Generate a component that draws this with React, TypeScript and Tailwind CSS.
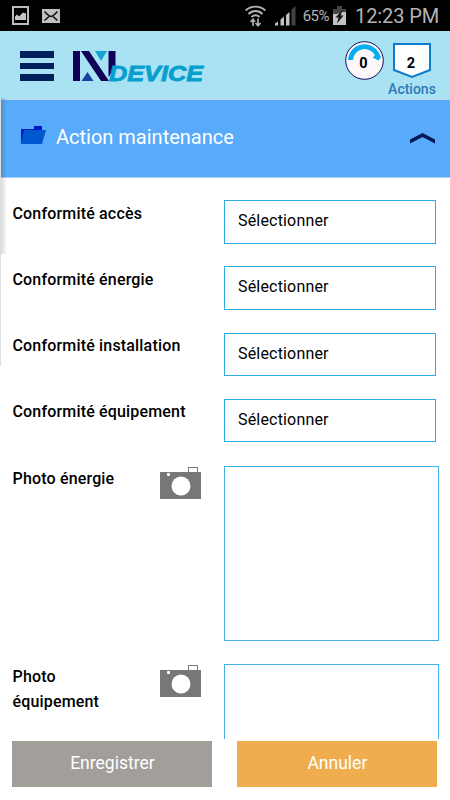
const fields = [
  { label: 'Conformité accès', value: 'Sélectionner' },
  { label: 'Conformité énergie', value: 'Sélectionner' },
  { label: 'Conformité installation', value: 'Sélectionner' },
  { label: 'Conformité équipement', value: 'Sélectionner' },
];

const photos = [{ label: 'Photo énergie' }, { label: 'Photo équipement' }];

const StatusBar = () => (
  <div className="flex h-[31px] shrink-0 items-center justify-between bg-black pr-[12px] pl-[12px] text-[#b3b3b3]">
    <div className="flex items-center gap-[13px]">
      <svg width="17" height="19" viewBox="0 0 17 19">
        <rect x="1" y="1" width="15" height="17" fill="none" stroke="#bdbdbd" strokeWidth="2" />
        <path d="M3 13V10.500l2-2 2 2 4-4 3 1V14H3z" fill="#c6c6c6" />
      </svg>
      <svg width="18" height="14" viewBox="0 0 18 14">
        <rect width="18" height="14" fill="#c0c0c0" />
        <path d="M2.500 2.500C6 6 7 7.500 9 7.500S12 6 15.500 2.500M2.500 11.500l4.500-4M15.500 11.500l-4.500-4" fill="none" stroke="#111" strokeWidth="1.600" />
      </svg>
    </div>
    <div className="flex items-center">
      <svg className="mr-[9px]" width="21" height="22" viewBox="0 0 21 22" fill="none" stroke="#b3b3b3" strokeWidth="1.900">
        <path d="M.700 5.500C6 .300 15 .300 20.300 5.500M3.500 9C7.500 5 13.500 5 17.500 9M6.500 12C9 9.800 12 9.800 14.500 12" />
        <path d="M8 21v-7M5.500 17 8 14.300l2 2.500M13 13.500v7M10.500 18l2.500 2.700 2.500-2.700" strokeWidth="1.700" />
      </svg>
      <svg className="mr-[7px]" width="21" height="20" viewBox="0 0 21 20">
        <path d="M0 19.500v-2l3-2v4zM5.500 19.500v-6l3.500-3v9zM11 19.500V9l3.500-3v13.500z" fill="#c2c2c2" />
        <path d="M16.500 19.500V3.500L20.500 0v19.500z" fill="#424242" />
      </svg>
      <span className="mr-[4px] text-[15px] leading-[20px] tracking-[-0.500px]">65%</span>
      <svg className="mr-[9px]" width="13" height="20" viewBox="0 0 13 20">
        <path d="M0 3h4V0h5v3h4v6H0z" fill="#444" />
        <path d="M0 8h4l5-2h4v13H0z" fill="#c2c2c2" />
        <path d="M10 3.500 2.500 11.500h3L4 17.500l6.500-8H7.500z" fill="#111" />
      </svg>
      <span className="w-[83px] text-[20px] leading-[24px] tracking-[-0.100px] whitespace-nowrap">12:23 PM</span>
    </div>
  </div>
);

const Logo = () => (
  <svg width="140" height="36" viewBox="0 0 140 36">
    <path d="M0 0h7v30H0zM8 0h8l20 30h-8zM35.500 0h7v17l-7 9z" fill="#100058" />
    <path d="M22 0h12l-6 10z" fill="#12a5d3" />
    <path d="M14.500 21l6 9h-12z" fill="#1742a0" />
    <text
      x="36"
      y="30"
      textLength="94"
      lengthAdjust="spacingAndGlyphs"
      fontFamily="Liberation Sans, sans-serif"
      fontSize="21.500"
      fontWeight="700"
      fontStyle="italic"
      fill="#079fce"
      stroke="#079fce"
      strokeWidth=".8"
    >
      DEVICE
    </text>
  </svg>
);

const Header = () => (
  <header className="flex h-[68px] shrink-0 justify-between bg-[#a9e2f3] pr-[14px] pl-[20px]">
    <div className="flex pt-[20px]">
      <button className="mr-[19px] flex w-[34px] flex-col gap-[5px]" aria-label="Menu">
        <span className="h-[7px] w-full bg-[#00205b]" />
        <span className="h-[6px] w-full bg-[#00205b]" />
        <span className="h-[7px] w-full bg-[#00205b]" />
      </button>
      <Logo />
    </div>
    <div className="flex pt-[10px] text-[15px] font-medium text-black">
      <svg className="mr-[4px]" width="39" height="39" viewBox="0 0 39 39">
        <circle cx="19.500" cy="19.500" r="18.800" fill="#fcf7fa" stroke="#120b66" strokeWidth="1" />
        <path d="M5.500 19A14 14 0 0 1 32.500 14.500" fill="none" stroke="#08adf0" strokeWidth="4.800" />
        <path d="M27.500 16.500 33.500 19.500 36 16 33.500 11.500z" fill="#08adf0" />
        <text x="18.500" y="26.500" textAnchor="middle" fontWeight="700" fontSize="14.500">0</text>
      </svg>
      <div className="flex w-[48px] flex-col items-center">
        <svg width="40" height="38" viewBox="0 0 40 38">
          <path d="M2 3h36v26l-18 7L2 29z" fill="#fff" stroke="#0b7bcd" strokeWidth="2" />
          <text x="19" y="26.500" textAnchor="middle" fontWeight="700" fontSize="14.500">2</text>
        </svg>
        <span className="text-[14px] leading-[20px] font-medium text-[#2f79b9]">Actions</span>
      </div>
    </div>
  </header>
);

const SectionHeader = () => (
  <div className="flex h-[79px] shrink-0 items-center border-t border-b border-t-[#bed8e4] border-b-[#a9cff5] bg-[#58aafa] pr-[15px] pb-[4px] pl-[21px]">
    <svg className="mr-[10px] mb-[4px]" width="25" height="18" viewBox="0 0 25 18">
      <path d="M0 3h13V0h8v5L4 17H0z" fill="#0018c8" />
      <path d="M3 4h22l-4 14H0z" fill="#0058d0" />
    </svg>
    <h1 className="grow text-[20px] leading-[28px] font-normal text-white">Action maintenance</h1>
    <svg className="mt-[4px]" width="25" height="11" viewBox="0 0 25 11">
      <path d="M0 6.500 12.500 0 25 6.500v4L12.500 4 0 10.500z" fill="#061759" />
    </svg>
  </div>
);

const Camera = () => (
  <svg className="mt-[1px] shrink-0" width="41" height="32" viewBox="0 0 41 32">
    <rect x="28.500" y=".5" width="9" height="5" fill="#fff" stroke="#777" />
    <path d="M0 5h41v27H0z" fill="#777" />
    <circle cx="21" cy="19" r="9.500" fill="#fff" />
    <rect x="7" y="6" width="3" height="3" rx="1" fill="#fff" />
  </svg>
);

const SelectRow = ({ label, value }: { label: string; value: string }) => (
  <div className="flex h-[66.300px] shrink-0 items-start justify-between pr-[14px]">
    <label className="pt-[0.500px] text-[16px] leading-[26px] font-medium tracking-[0.170px]">{label}</label>
    <div className="h-[43.500px] w-[212px] border border-[#2caae2] bg-white pt-[8px] pl-[13px] text-[16px] leading-[24px] tracking-[0.180px]">
      {value}
    </div>
  </div>
);

const PhotoRow = ({ label }: { label: string }) => (
  <div className="flex h-[198px] shrink-0 items-start pr-[11px]">
    <label className="w-[147px] shrink-0 pr-[35px] text-[16px] leading-[25px] font-medium tracking-[0.170px]">{label}</label>
    <Camera />
    <div className="ml-auto h-[175px] w-[215px] border border-[#43b0e8] bg-white" />
  </div>
);

export default function App() {
  return (
    <div className="relative flex h-[800px] w-[450px] flex-col overflow-hidden bg-white font-['Roboto',sans-serif] text-black">
      <StatusBar />
      <Header />
      <SectionHeader />
      <main className="flex h-[561px] flex-col overflow-hidden pt-[22px] pl-[12.500px]">
        {fields.map((field) => (
          <SelectRow key={field.label} {...field} />
        ))}
        <div className="flex shrink-0 flex-col pt-[0.600px]">
          {photos.map((photo) => (
            <PhotoRow key={photo.label} {...photo} />
          ))}
        </div>
      </main>
      <footer className="flex gap-[25px] px-[12.400px] pt-[2px] text-[17.500px] text-white">
        <button className="h-[46px] w-[200px] bg-[#a29e9a] pb-[2px]">Enregistrer</button>
        <button className="h-[46px] w-[200px] bg-[#efad4f] pb-[2px]">Annuler</button>
      </footer>
      {/* edge of the closed side menu */}
      <div className="absolute top-[100px] left-0 h-[266px] w-px bg-[#dedede]" />
      <div className="absolute top-[98px] left-px h-[156px] w-[6px] bg-linear-to-r from-black/15 to-transparent" />
    </div>
  );
}
